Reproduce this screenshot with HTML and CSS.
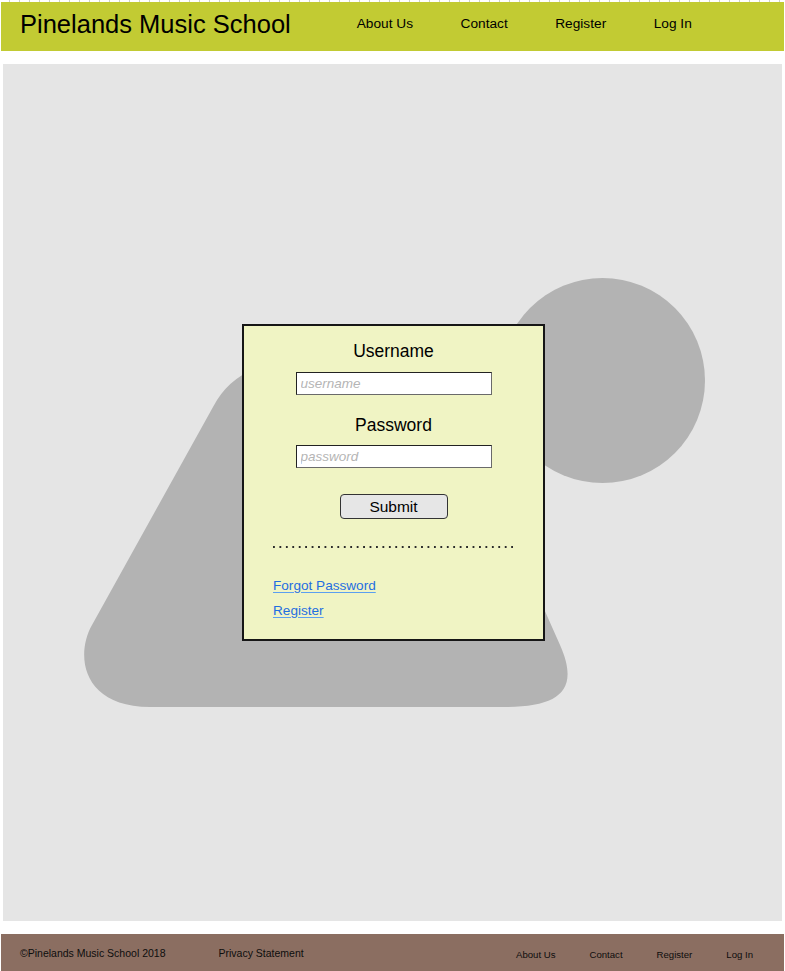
FILE: index.html
```html
<!DOCTYPE html>
<html lang="en">
<head>
<meta charset="utf-8">
<title>Pinelands Music School – Log In</title>
<link rel="stylesheet" href="styles.css">
</head>
<body>
<div class="ticks"></div>
<header class="site-header">
  <div class="brand">Pinelands Music School</div>
  <nav class="main-nav">
    <a href="#">About Us</a>
    <a href="#">Contact</a>
    <a href="#">Register</a>
    <a href="#">Log In</a>
  </nav>
</header>

<main class="panel">
  <svg class="backdrop" viewBox="3 64 779 857" preserveAspectRatio="none" aria-hidden="true">
    <circle cx="602.5" cy="380.5" r="102.5" fill="#b3b3b3"/>
    <path fill="#b3b3b3" d="M 300 360 Q 236 362 213 407 L 92 625 C 75 655 82 707 150 707 L 505 707 C 560 707 580 690 560 645 L 520 555 L 420 360 Z"/>
  </svg>
  <form class="login-card">
    <label class="field-label" for="u">Username</label>
    <input class="field" id="u" type="text" placeholder="username">
    <label class="field-label second" for="p">Password</label>
    <input class="field" id="p" type="password" placeholder="password">
    <button class="submit" type="button">Submit</button>
    <div class="dots"></div>
    <div class="links">
      <a href="#">Forgot Password</a>
      <a href="#">Register</a>
    </div>
  </form>
</main>

<footer class="site-footer">
  <div class="foot-left">
    <span class="copy">©Pinelands Music School 2018</span>
    <a href="#" class="privacy">Privacy Statement</a>
  </div>
  <nav class="foot-nav">
    <a href="#">About Us</a>
    <a href="#">Contact</a>
    <a href="#">Register</a>
    <a href="#">Log In</a>
  </nav>
</footer>
</body>
</html>
```

FILE: styles.css
```css
* { box-sizing: border-box; }

html, body {
  margin: 0;
  padding: 0;
  background: #ffffff;
}

body {
  width: 785px;
  height: 971px;
  overflow: hidden;
  font-family: "Liberation Sans", Arial, sans-serif;
  color: #000;
}

a { color: inherit; text-decoration: none; }

.ticks {
  height: 2px;
  background: repeating-linear-gradient(90deg, #ffffff 0 9px, #cfcfcf 9px 10px);
}

.site-header {
  margin: 0 1px;
  height: 49px;
  background: #c2cb33;
  display: flex;
  align-items: center;
  padding-left: 19px;
}

.brand {
  font-size: 25.5px;
  line-height: 30px;
  margin-top: -6px;
}

.main-nav {
  display: flex;
  gap: 47.5px;
  margin-left: 66px;
  margin-top: -6px;
}

.main-nav a {
  font-size: 13.7px;
  line-height: 18px;
}

.panel {
  position: relative;
  margin: 13px 3px 13px 3px;
  height: 857px;
  background: #e5e5e5;
  display: flex;
  justify-content: center;
  align-items: center;
  padding-bottom: 20px;
}

.backdrop {
  position: absolute;
  inset: 0;
  width: 100%;
  height: 100%;
}

.login-card {
  position: relative;
  width: 303px;
  height: 317px;
  margin-left: 2px;
  background: #f0f4c4;
  border: 2px solid #161616;
  display: flex;
  flex-direction: column;
  align-items: center;
  padding: 15px 29px 0 29px;
}

.field-label {
  font-size: 17.5px;
  line-height: 20px;
  margin-bottom: 11px;
}

.field-label.second {
  margin-top: 20px;
  margin-bottom: 10px;
}

.field {
  width: 196px;
  height: 23px;
  margin: 0;
  padding: 0 4px;
  background: #fff;
  border: 1px solid;
  border-color: #222 #6a6a6a #6a6a6a #222;
  font-family: "Liberation Sans", Arial, sans-serif;
  font-size: 13.5px;
  outline: none;
}

.field::placeholder {
  color: #b5b5b5;
  font-style: italic;
}

.submit {
  margin-top: 26px;
  width: 108px;
  height: 25px;
  padding: 0;
  background: #e6e6e6;
  border: 1px solid #333;
  border-radius: 4px;
  font-family: "Liberation Sans", Arial, sans-serif;
  font-size: 15.5px;
  color: #000;
}

.dots {
  align-self: stretch;
  margin-top: 27px;
  height: 2px;
  background-image: linear-gradient(90deg, #2a2a2a 0 2px, transparent 2px);
  background-size: 6.45px 2px;
  background-repeat: repeat-x;
}

.links {
  align-self: stretch;
  margin-top: 28px;
  display: flex;
  flex-direction: column;
  align-items: flex-start;
  gap: 5px;
}

.links a {
  font-size: 13.6px;
  line-height: 20px;
  color: #1f6ee0;
  text-decoration: underline;
  text-decoration-color: #5b9ff0;
  text-underline-offset: 2px;
}

.site-footer {
  margin: 0 1px;
  height: 37px;
  background: #8b6e61;
  display: flex;
  align-items: center;
  padding-left: 19px;
  color: #0d0d0d;
}

.foot-left {
  display: flex;
  align-items: center;
}

.copy, .privacy {
  font-size: 10.5px;
}

.privacy { margin-left: 53px; }

.foot-nav {
  display: flex;
  margin-left: auto;
  margin-right: 31px;
  gap: 34px;
  margin-top: 4px;
}

.foot-nav a {
  font-size: 9.6px;
}
```
